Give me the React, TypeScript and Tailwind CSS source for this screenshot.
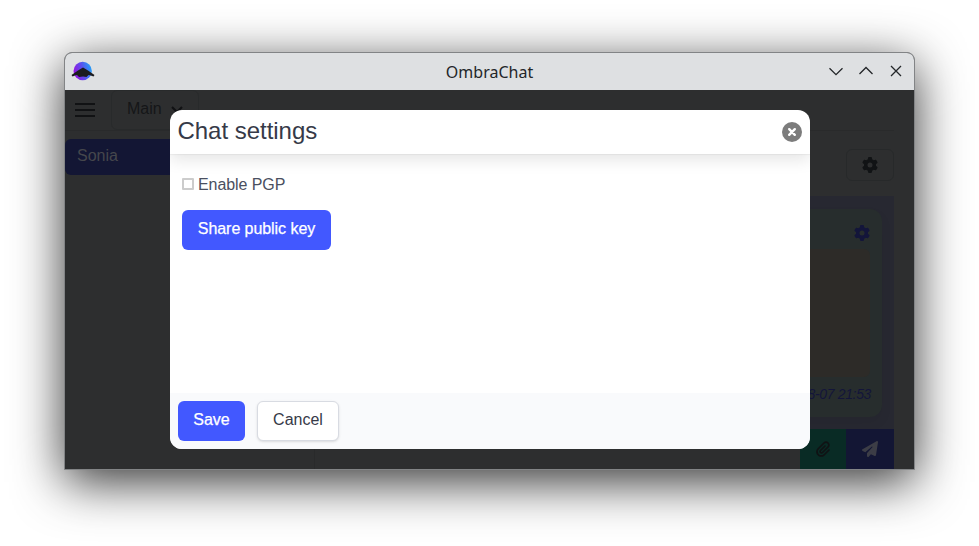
import React from "react";
import { FaGear, FaPaperclip, FaPaperPlane } from "react-icons/fa6";

function Logo() {
  return (
    <svg className="h-6 w-6" viewBox="0 0 24 24">
      <defs>
        <linearGradient id="orb" x1="0" x2="1" y1="0.6" y2="0.3">
          <stop offset="0" stopColor="#9a10e0" />
          <stop offset="0.5" stopColor="#5a50ee" />
          <stop offset="1" stopColor="#22a4f8" />
        </linearGradient>
      </defs>
      <circle cx="11.7" cy="11" r="9.2" fill="url(#orb)" />
      <path
        d="M12 7.5 L17 10.500 L23.500 15 L22.500 16.500 L19 15.300 L17.500 15 L15.500 17 L12 16.500 L8 17 L6 15 L4.500 15.300 L1.500 16.500 L.5 15 L7 10.500Z"
        fill="#1c1c20"
      />
    </svg>
  );
}

function CloseIcon() {
  return (
    <svg className="h-5 w-5" viewBox="0 0 20 20" fill="none">
      <circle cx="10" cy="10" r="10" fill="#7c7c7c" />
      <path d="M7.200 7.200 L12.800 12.800 M12.800 7.200 L7.200 12.800" stroke="white" strokeWidth="2.400" strokeLinecap="round" />
    </svg>
  );
}

function TitleBar() {
  return (
    <header className="grid h-[37px] shrink-0 grid-cols-[1fr_auto_1fr] items-center bg-[#dee0e2] text-[#232629]">
      <div className="pl-[6px]">
        <Logo />
      </div>
      <h1 className="pt-px font-['Noto_Sans',sans-serif] text-[16px] leading-6">OmbraChat</h1>
      <svg className="mr-[8px] mt-[-1px] h-4 w-20 justify-self-end" viewBox="0 0 80 16" fill="none" stroke="#232629" strokeWidth="1.3">
        <path d="M3.5 5.2 L10 11.700 L16.500 5.200" />
        <path d="M33.500 11 L40 4.500 L46.500 11" />
        <path d="M65 3 L75 13 M75 3 L65 13" />
      </svg>
    </header>
  );
}

function NavBar() {
  return (
    <nav className="mr-5 flex h-[41px] shrink-0 items-start border-b border-[#292a2b]">
      <svg className="ml-[10px] mt-[12px] h-4 w-5" viewBox="0 0 20 16" stroke="#111214" strokeWidth="2">
        <path d="M0 2H20M0 8H20M0 14H20" />
      </svg>
      <div className="ml-4 flex h-10 w-[88px] items-center rounded-md border border-[#282a2b] pb-[2px] pl-[15px] text-[#151618]">
        <span className="w-[34px]">Main</span>
        <svg className="ml-[10px] mt-1 h-3 w-3" viewBox="0 0 12 12" fill="none" stroke="#101113" strokeWidth="2">
          <path d="M1 2 L6 7 L11 2" />
        </svg>
      </div>
    </nav>
  );
}

function Conversation() {
  return (
    <main className="mr-5 flex flex-1 flex-col">
      <div className="flex h-[65px] items-start justify-end pt-[18px]">
        <div className="flex h-8 w-12 items-center justify-center rounded-md border border-[#27292a] text-[#111315]">
          <FaGear size={16} />
        </div>
      </div>
      <div className="flex h-[233px] justify-end bg-[#272831] pr-3 pt-[13px]">
        <div className="flex h-[208px] w-[360px] flex-col rounded-xl bg-[#272d2d] px-3 text-[#13153a] shadow-[0_6px_12px_rgba(0,0,0,0.06)]">
          <div className="flex h-10 items-center justify-end pt-2">
            <FaGear size={16} />
          </div>
          <div className="h-32 rounded-md bg-[#2d2b28]" />
          <time className="mr-[-1px] pt-[8px] text-right text-[14px] leading-[18px] tracking-[-0.35px] italic">2022-08-07 21:53</time>
        </div>
      </div>
      <div className="flex h-10 justify-end">
        <div className="flex w-[46px] items-center justify-center bg-[#092b25] text-[#101214]">
          <FaPaperclip size={16} />
        </div>
        <div className="flex w-12 items-center justify-center bg-[#131634] text-[#3c3d46]">
          <FaPaperPlane size={16} />
        </div>
      </div>
    </main>
  );
}

function SettingsModal() {
  return (
    <section className="absolute left-[105px] top-[57px] flex h-[339px] w-[640px] flex-col overflow-hidden rounded-xl bg-white text-[#363a48]">
      <header className="relative flex h-11 shrink-0 items-center justify-between px-2 shadow-[0_1px_1px_rgba(10,10,10,0.04),0_6px_16px_rgba(10,10,10,0.10)]">
        <h2 className="ml-[-0.5px] pb-[2px] text-[24px] leading-8 tracking-[-0.03px]">Chat settings</h2>
        <CloseIcon />
      </header>
      <div className="flex flex-1 flex-col items-start px-3 pt-[18px]">
        <label className="flex h-6 items-center text-[16px] text-[#4a4f60]">
          <input type="checkbox" className="mr-1 h-3 w-3 appearance-none rounded-[1px] border-2 border-[#cccccc]" />
          <span className="pt-[2px] tracking-[-0.08px]">Enable PGP</span>
        </label>
        <button className="mt-[14px] h-10 w-[149px] rounded-md bg-[#4258ff] pb-[3px] text-[16px] tracking-[-0.06px] text-white [-webkit-text-stroke:0.25px_white]">
          Share public key
        </button>
      </div>
      <footer className="flex h-14 shrink-0 items-start gap-3 bg-[#f9fafc] p-2">
        <button className="h-10 w-[67px] rounded-md bg-[#4258ff] pb-[3px] text-[16px] text-white [-webkit-text-stroke:0.25px_white]">
          Save
        </button>
        <button className="h-10 w-[82px] rounded-md border border-[#d8dbe2] bg-white pb-[3px] text-[16px] shadow-sm">
          Cancel
        </button>
      </footer>
    </section>
  );
}

export default function App() {
  return (
    <div className="h-[546px] w-[979px] overflow-hidden bg-white pl-16 pt-[52px] font-['Liberation_Sans',Arial,sans-serif] text-[16px]">
      <div className="relative flex h-[418px] w-[851px] flex-col overflow-hidden rounded-t-lg border border-[#828486] bg-[#2d2e2f] shadow-[0_12px_50px_rgba(0,0,0,0.8)]">
        <TitleBar />
        <NavBar />
        <div className="flex flex-1">
          <aside className="w-[250px] border-r border-[#292a2b] pt-2">
            <div className="h-9 rounded-md bg-[#131634] pl-3 pt-[5px] leading-6 text-[#45474c]">Sonia</div>
          </aside>
          <Conversation />
        </div>
        <SettingsModal />
      </div>
    </div>
  );
}
